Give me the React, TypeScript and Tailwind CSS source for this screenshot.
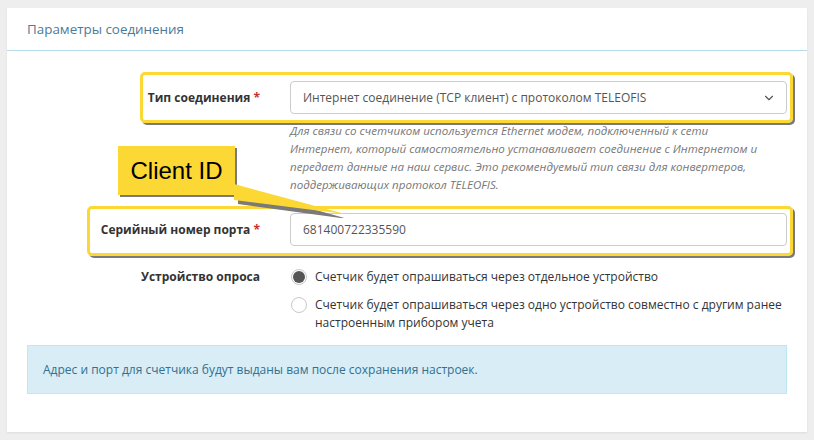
import { ChevronDown } from 'lucide-react';

const font = { fontFamily: '"Open Sans", "Noto Sans", sans-serif' };

function Label({ text, required = false }: { text: string; required?: boolean }) {
  return (
    <div className="w-[248px] shrink-0 pr-[15px] text-right text-[12px] font-bold leading-[18px] text-[#333]">
      {text}
      {required && <span className="text-[#c9302c]"> *</span>}
    </div>
  );
}

function Radio({ checked }: { checked?: boolean }) {
  return (
    <span className="mt-[1px] flex h-[16px] w-[16px] shrink-0 items-center justify-center rounded-full border border-[#c8c8c8] bg-white">
      {checked && <span className="h-[12px] w-[12px] rounded-full bg-[#555]" />}
    </span>
  );
}

export default function App() {
  return (
    <div className="min-h-[440px] bg-[#eeeeee] px-[7px] pt-[8px] pb-[8px]" style={font}>
      <div className="relative bg-white shadow-[0_1px_2px_rgba(0,0,0,0.08)]">
        <div className="border-b border-[#b4dbe8] px-[20px] pt-[11px] pb-[11px] text-[13.4px] leading-[20px] text-[#4d7a97]">
          Параметры соединения
        </div>

        <div className="px-[20px] pt-[30px] pb-[38px]">
          {/* connection type */}
          <div className="flex items-start">
            <div className="flex h-[33px] items-center">
              <Label text="Тип соединения" required />
            </div>
            <div className="flex-1 pl-[15px]">
              <div className="flex h-[33px] items-center justify-between rounded-[4px] border border-[#cccccc] bg-white pl-[12px] pr-[10px] text-[12px] text-[#555]">
                <span>Интернет соединение (TCP клиент) с протоколом TELEOFIS</span>
                <ChevronDown className="h-[14px] w-[14px] text-[#555]" strokeWidth={2} />
              </div>
              <p className="mt-[8px] whitespace-nowrap text-[11.55px] italic leading-[18px] text-[#777]">
                Для связи со счетчиком используется Ethernet модем, подключенный к сети
                <br />
                Интернет, который самостоятельно устанавливает соединение с Интернетом и
                <br />
                передает данные на наш сервис. Это рекомендуемый тип связи для конвертеров,
                <br />
                поддерживающих протокол TELEOFIS.
              </p>
            </div>
          </div>

          {/* serial number */}
          <div className="mt-[19px] flex items-start">
            <div className="flex h-[33px] items-center">
              <Label text="Серийный номер порта" required />
            </div>
            <div className="flex-1 pl-[15px]">
              <div className="flex h-[33px] items-center rounded-[4px] border border-[#cccccc] bg-white pl-[12px] text-[12px] text-[#555]">
                681400722335590
              </div>
            </div>
          </div>

          {/* polling device */}
          <div className="mt-[22px] flex items-start">
            <Label text="Устройство опроса" />
            <div className="flex flex-1 flex-col gap-[10px] pl-[15px] text-[12px] leading-[18px] text-[#333]">
              <div className="flex items-start gap-[8px] pl-[1px]">
                <Radio checked />
                <span>Счетчик будет опрашиваться через отдельное устройство</span>
              </div>
              <div className="flex items-start gap-[8px] pl-[1px]">
                <Radio />
                <span>
                  Счетчик будет опрашиваться через одно устройство совместно с другим ранее
                  <br />
                  настроенным прибором учета
                </span>
              </div>
            </div>
          </div>

          <div className="mt-[13px] border border-[#bce8f1] bg-[#d9edf7] px-[15px] py-[15px] text-[12px] leading-[17px] text-[#31708f]">
            Адрес и порт для счетчика будут выданы вам после сохранения настроек.
          </div>
        </div>

        {/* annotation overlays */}
        <div className="pointer-events-none absolute left-[133px] top-[64px] h-[51px] w-[653px] rounded-[5px] border-[3px] border-[#fcd835] shadow-[2px_2px_0_#7a7a7a]" />
        <div className="pointer-events-none absolute left-[80px] top-[198px] h-[50px] w-[706px] rounded-[5px] border-[3px] border-[#fcd835] shadow-[2px_2px_0_#7a7a7a]" />

        <svg className="pointer-events-none absolute left-[111px] top-[138px]" width="240" height="72" viewBox="0 0 240 72">
          <polygon points="119,40 229,71 119,56" fill="#7a7a7a" transform="translate(1,2)" />
          <rect x="2" y="2" width="117" height="49" fill="#7a7a7a" />
          <rect x="0" y="0" width="117" height="49" fill="#fcd835" />
          <polygon points="116,38 227,68 116,54" fill="#fcd835" />
        </svg>
        <div
          className="pointer-events-none absolute left-[111px] top-[138px] flex h-[49px] w-[117px] items-center justify-center text-[24px] text-black"
          style={{ fontFamily: '"Liberation Sans", Arial, sans-serif' }}
        >
          Client ID
        </div>
      </div>
    </div>
  );
}
